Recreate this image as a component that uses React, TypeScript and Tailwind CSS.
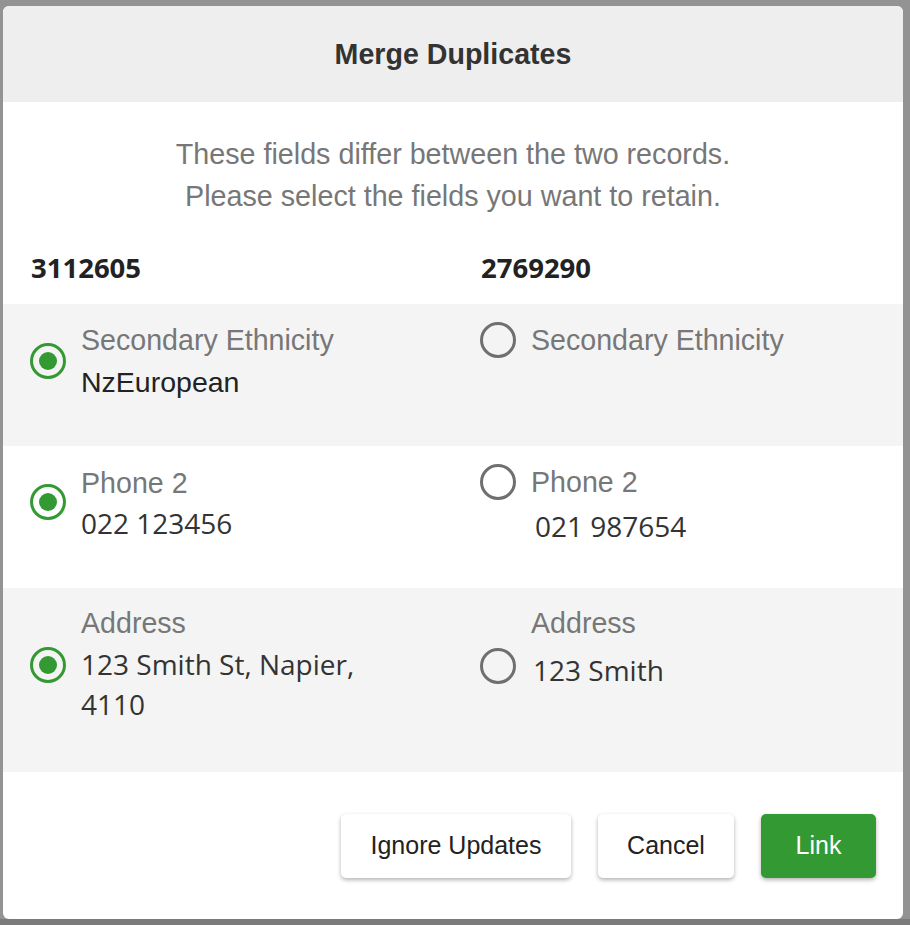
import React from "react";

const UI = { fontFamily: "'Liberation Sans', Arial, sans-serif" };
const SEG = { fontFamily: "'Open Sans', 'Noto Sans', sans-serif" };

function Radio({ checked }: { checked?: boolean }) {
  return checked ? (
    <div className="w-[36px] h-[36px] shrink-0 rounded-full border-[3px] border-[#339933] flex items-center justify-center">
      <div className="w-[18px] h-[18px] rounded-full bg-[#339933]" />
    </div>
  ) : (
    <div className="w-[36px] h-[36px] shrink-0 rounded-full border-[3px] border-[#6f6f6f]" />
  );
}

export default function App() {
  return (
    <div className="w-[910px] h-[925px] bg-[#939393] pl-[3px] pt-[6px] border-b-[6px] border-[#7b7b7b] box-border">
      <div className="w-[900px] h-[913px] bg-white rounded-[6px] overflow-hidden flex flex-col" style={UI}>
        <div className="h-[96px] bg-[#eeeeee] flex items-center justify-center">
          <span className="text-[28.6px] font-bold text-[#333333]">Merge Duplicates</span>
        </div>

        <div className="pt-[31px] text-center text-[28.7px] leading-[42px] text-[#777777]">
          <div>These fields differ between the two records.</div>
          <div>Please select the fields you want to retain.</div>
        </div>

        <div className="mt-[31px] pb-[16px] grid grid-cols-[450px_450px]" style={SEG}>
          <div className="pl-[28px] h-[40px] leading-[40px] text-[27.5px] font-bold text-[#222222]">3112605</div>
          <div className="pl-[28px] h-[40px] leading-[40px] text-[27.5px] font-bold text-[#222222]">2769290</div>
        </div>

        {/* Row 1 */}
        <div className="h-[142px] bg-[#f4f4f4] grid grid-cols-[450px_450px]">
          <div className="pl-[27px] pt-[15px] flex items-start">
            <div className="flex items-center gap-[15px]">
              <Radio checked />
              <div>
                <div className="text-[28.6px] leading-[42px] text-[#777777]">Secondary Ethnicity</div>
                <div className="text-[28.5px] leading-[42px] text-[#222222]">NzEuropean</div>
              </div>
            </div>
          </div>
          <div className="pl-[27px] pt-[15px] flex items-start gap-[15px]">
            <div className="mt-[3px]">
              <Radio />
            </div>
            <div className="text-[28.6px] leading-[42px] text-[#777777]">Secondary Ethnicity</div>
          </div>
        </div>

        {/* Row 2 */}
        <div className="h-[142px] bg-white grid grid-cols-[450px_450px]">
          <div className="pl-[27px] pt-[16px] flex items-start">
            <div className="flex items-center gap-[15px]">
              <Radio checked />
              <div>
                <div className="text-[28.6px] leading-[42px] text-[#777777]">Phone 2</div>
                <div className="text-[28px] leading-[38px] text-[#333333]" style={SEG}>022 123456</div>
              </div>
            </div>
          </div>
          <div className="pl-[27px] pt-[15px] flex items-start gap-[15px]">
            <div className="mt-[3px]">
              <Radio />
            </div>
            <div>
              <div className="text-[28.6px] leading-[42px] text-[#777777]">Phone 2</div>
              <div className="ml-[4px] text-[28px] leading-[46px] text-[#333333]" style={SEG}>021 987654</div>
            </div>
          </div>
        </div>

        {/* Row 3 */}
        <div className="h-[184px] bg-[#f4f4f4] grid grid-cols-[450px_450px]">
          <div className="pl-[27px] pt-[14px]">
            <div className="pl-[51px] text-[28.6px] leading-[42px] text-[#777777]">Address</div>
            <div className="flex items-start gap-[15px]">
              <div className="mt-[3px]">
                <Radio checked />
              </div>
              <div className="text-[28px] leading-[40px] text-[#333333]" style={SEG}>
                123 Smith St, Napier,
                <br />
                4110
              </div>
            </div>
          </div>
          <div className="pl-[27px] pt-[14px]">
            <div className="pl-[51px] text-[28.6px] leading-[42px] text-[#777777]">Address</div>
            <div className="flex items-start gap-[15px]">
              <div className="mt-[4px]">
                <Radio />
              </div>
              <div className="ml-[2px] mt-[6px] text-[28px] leading-[40px] text-[#333333]" style={SEG}>
                123 Smith
              </div>
            </div>
          </div>
        </div>

        {/* Footer */}
        <div className="flex justify-end gap-[27px] pt-[42px] pr-[27px]">
          <button className="w-[230px] h-[64px] rounded-[5px] bg-white text-[25px] text-[#222222] shadow-[0_2px_4px_rgba(0,0,0,0.3)]">
            Ignore Updates
          </button>
          <button className="w-[136px] h-[64px] rounded-[5px] bg-white text-[25px] text-[#222222] shadow-[0_2px_4px_rgba(0,0,0,0.3)]">
            Cancel
          </button>
          <button className="w-[115px] h-[64px] rounded-[5px] bg-[#339933] text-[25px] text-white shadow-[0_2px_4px_rgba(0,0,0,0.3)]">
            Link
          </button>
        </div>
      </div>
    </div>
  );
}
